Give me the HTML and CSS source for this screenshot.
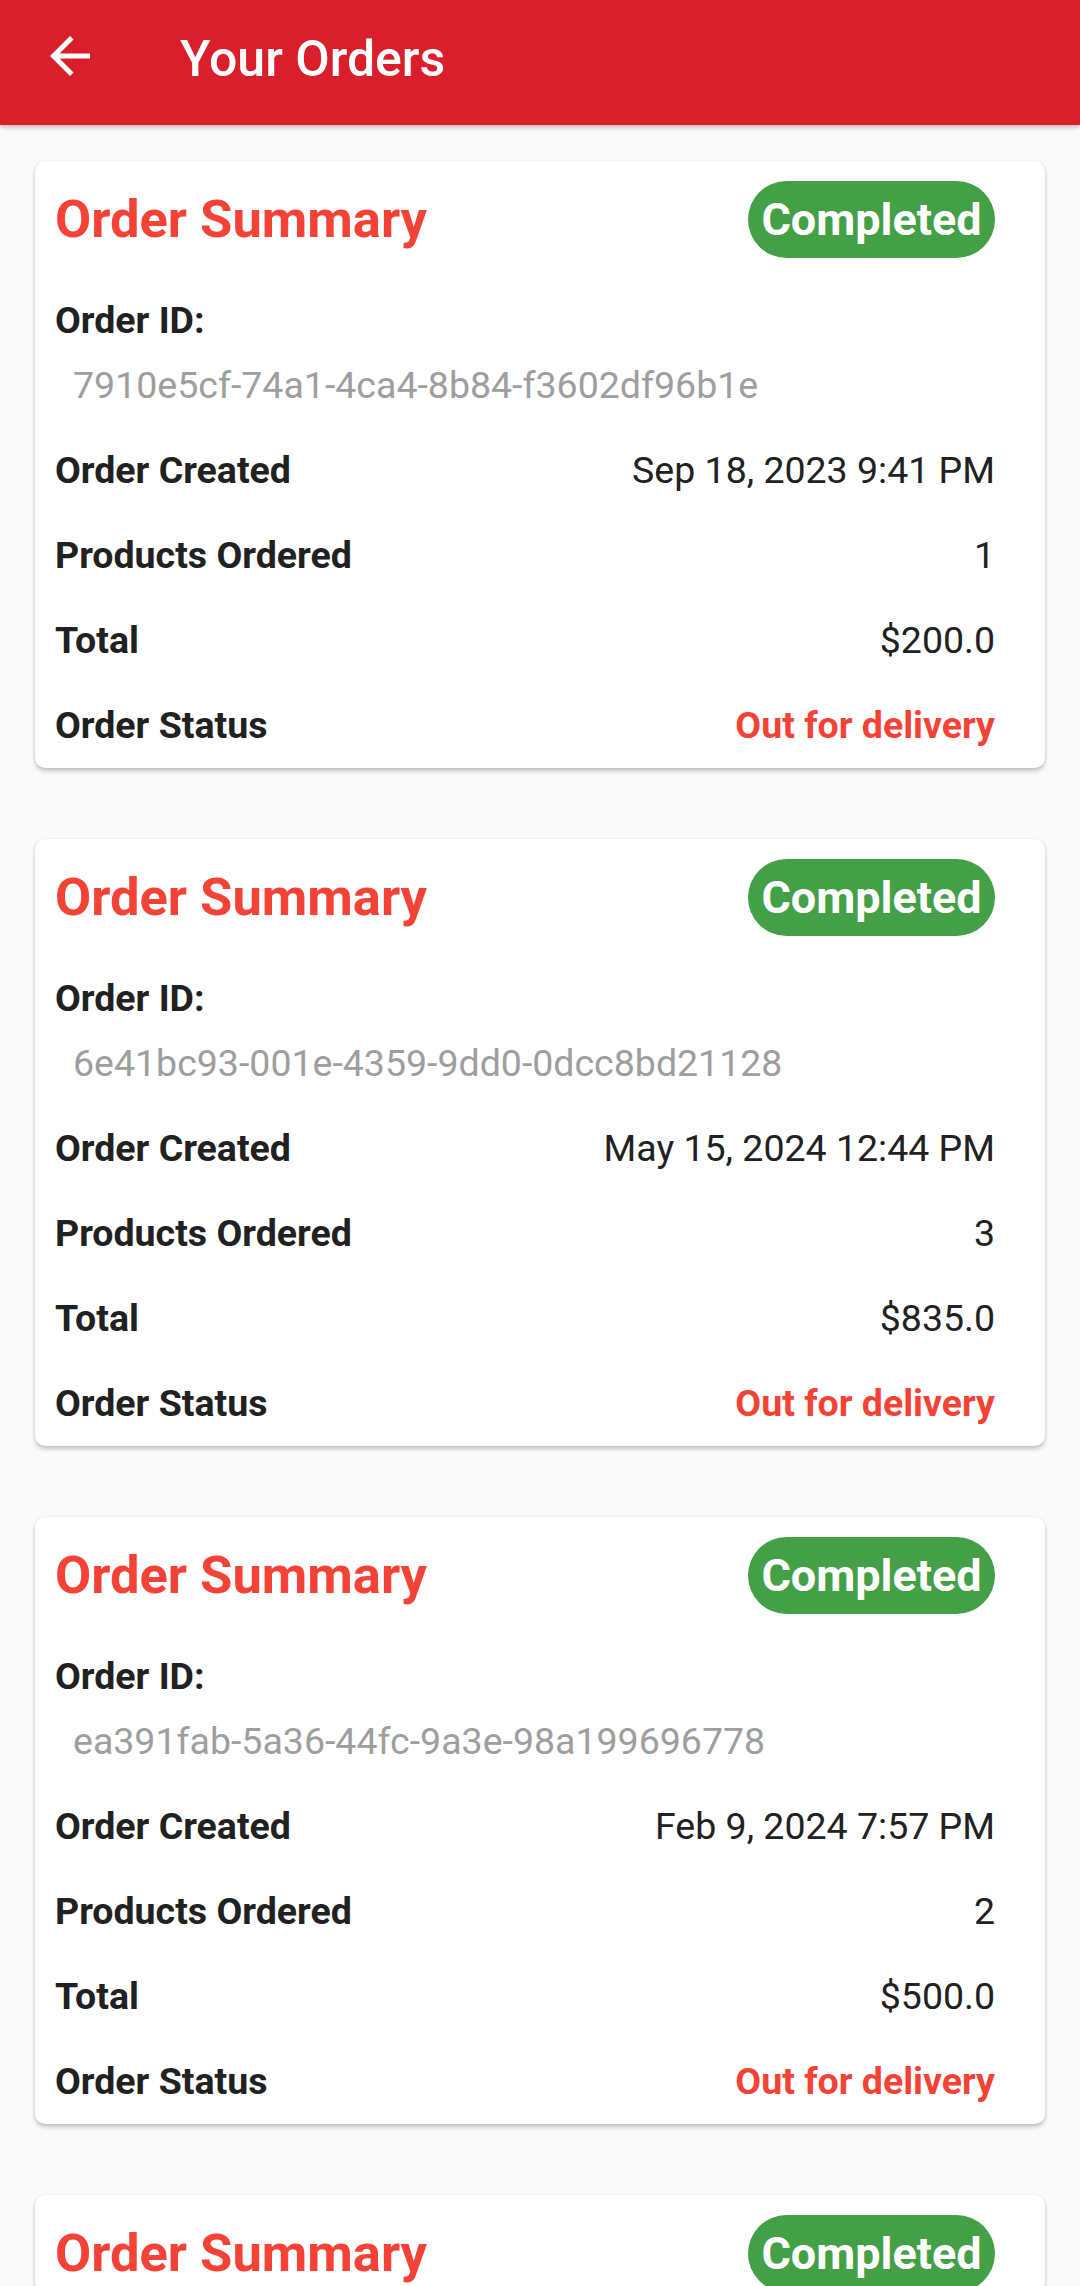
FILE: index.html
```html
<!DOCTYPE html>
<html lang="en">
<head>
<meta charset="utf-8">
<title>Your Orders</title>
<link rel="stylesheet" href="styles.css">
</head>
<body>
<header class="appbar">
  <div class="appbar-row">
    <span class="back" aria-label="Back">
      <svg viewBox="0 0 24 24" width="60" height="60"><path d="M20 11H7.83l5.59-5.59L12 4l-8 8 8 8 1.41-1.41L7.83 13H20v-2z" fill="#fff"/></svg>
    </span>
    <h1 class="appbar-title">Your Orders</h1>
  </div>
</header>
<main class="list">
  <section class="card">
    <div class="card-head">
      <h2 class="card-title">Order Summary</h2>
      <span class="badge">Completed</span>
    </div>
    <div class="id-label">Order ID:</div>
    <div class="id-value">7910e5cf-74a1-4ca4-8b84-f3602df96b1e</div>
    <div class="rows">
      <div class="row"><span class="label">Order Created</span><span class="value">Sep 18, 2023 9:41 PM</span></div>
      <div class="row"><span class="label">Products Ordered</span><span class="value">1</span></div>
      <div class="row"><span class="label">Total</span><span class="value">$200.0</span></div>
      <div class="row"><span class="label">Order Status</span><span class="value status">Out for delivery</span></div>
    </div>
  </section>
  <section class="card">
    <div class="card-head">
      <h2 class="card-title">Order Summary</h2>
      <span class="badge">Completed</span>
    </div>
    <div class="id-label">Order ID:</div>
    <div class="id-value">6e41bc93-001e-4359-9dd0-0dcc8bd21128</div>
    <div class="rows">
      <div class="row"><span class="label">Order Created</span><span class="value">May 15, 2024 12:44 PM</span></div>
      <div class="row"><span class="label">Products Ordered</span><span class="value">3</span></div>
      <div class="row"><span class="label">Total</span><span class="value">$835.0</span></div>
      <div class="row"><span class="label">Order Status</span><span class="value status">Out for delivery</span></div>
    </div>
  </section>
  <section class="card">
    <div class="card-head">
      <h2 class="card-title">Order Summary</h2>
      <span class="badge">Completed</span>
    </div>
    <div class="id-label">Order ID:</div>
    <div class="id-value">ea391fab-5a36-44fc-9a3e-98a199696778</div>
    <div class="rows">
      <div class="row"><span class="label">Order Created</span><span class="value">Feb 9, 2024 7:57 PM</span></div>
      <div class="row"><span class="label">Products Ordered</span><span class="value">2</span></div>
      <div class="row"><span class="label">Total</span><span class="value">$500.0</span></div>
      <div class="row"><span class="label">Order Status</span><span class="value status">Out for delivery</span></div>
    </div>
  </section>
  <section class="card">
    <div class="card-head">
      <h2 class="card-title">Order Summary</h2>
      <span class="badge">Completed</span>
    </div>
  </section>
</main>
</body>
</html>
```
FILE: styles.css
```css
* { box-sizing: border-box; }
html, body {
  margin: 0;
  padding: 0;
  background: #fafafa;
  font-family: Roboto, "Noto Sans", "Liberation Sans", sans-serif;
  color: #212121;
}
body { overflow: hidden; height: 2286px; }

.appbar {
  height: 125px;
  background: #d81f2b;
  box-shadow: 0 2px 5px rgba(0,0,0,0.28);
  position: relative;
  z-index: 2;
}
.appbar-row {
  display: flex;
  align-items: flex-start;
  padding: 26px 0 0 40px;
  gap: 80px;
}
.back { display: block; width: 60px; height: 60px; }
.back svg { display: block; }
.appbar-title {
  margin: 0;
  font-size: 50px;
  font-weight: 500;
  line-height: 66px;
  color: #fff;
}

.list {
  display: flex;
  flex-direction: column;
  gap: 71px;
  padding: 36px 35px 0 35px;
}
.card {
  width: 1010px;
  background: #fff;
  border-radius: 10px;
  box-shadow: 0 3px 4px rgba(0,0,0,0.22), 0 0 2px rgba(0,0,0,0.10);
  padding: 20px 50px 0 20px;
}
.card-head {
  display: flex;
  align-items: center;
  justify-content: space-between;
  height: 77px;
}
.card-title {
  margin: 0;
  font-size: 52.5px;
  font-weight: 700;
  color: #f44336;
  line-height: 77px;
}
.badge {
  display: flex;
  align-items: center;
  justify-content: center;
  width: 247px;
  height: 77px;
  border-radius: 39px;
  background: #43a047;
  color: #fff;
  font-size: 45px;
  font-weight: 700;
}
.id-label {
  margin-top: 32px;
  font-size: 37.5px;
  font-weight: 700;
  line-height: 60px;
}
.id-value {
  margin-top: 5px;
  padding-left: 18px;
  font-size: 37.5px;
  line-height: 60px;
  color: #9e9e9e;
}
.rows { margin-top: 13px; }
.row {
  display: flex;
  justify-content: space-between;
  height: 85px;
  line-height: 85px;
  font-size: 37.5px;
}
.label { font-weight: 700; }
.value { font-weight: 400; }
.value.status { font-weight: 700; color: #f44336; }
```
